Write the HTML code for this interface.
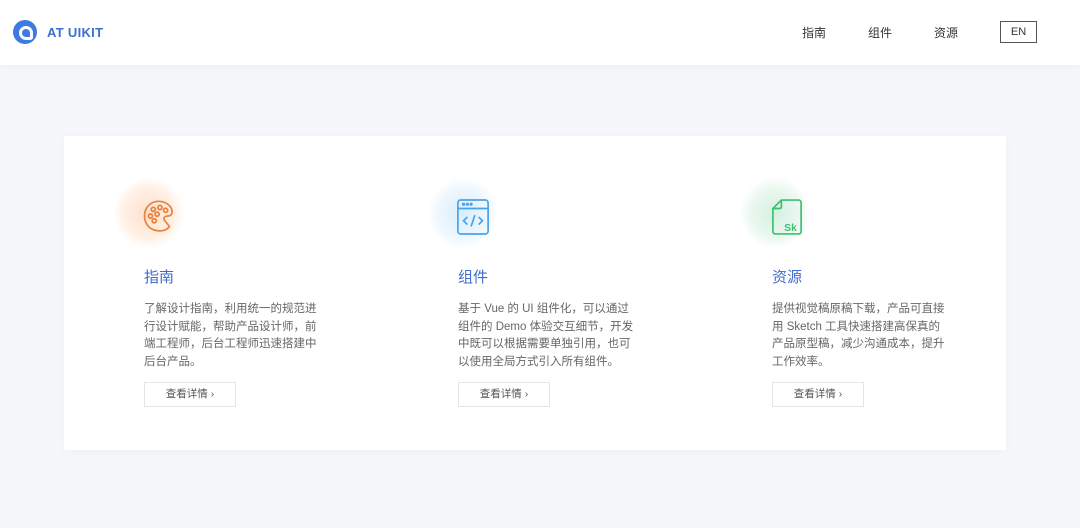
<!DOCTYPE html>
<html><head><meta charset="utf-8"><style>
*{margin:0;padding:0;box-sizing:border-box}
body{width:1080px;height:528px;background:#f6f7fb;font-family:"Liberation Sans","Noto Sans CJK SC",sans-serif;position:relative;overflow:hidden}
.hd{position:absolute;left:0;top:0;width:1080px;height:65px;background:#fff;box-shadow:0 2px 8px rgba(0,0,0,.04)}
.logo{position:absolute;left:13px;top:20px;width:24px;height:24px;border-radius:50%;background:#3d7be0}
.logo:after{content:"";position:absolute;left:6px;top:6px;width:8px;height:8px;border:3px solid #fff;border-radius:50% 50% 20% 50%}
.brand{position:absolute;left:47px;top:25px;font-size:13px;font-weight:bold;color:#3d6fcf;letter-spacing:.3px}
.nav{position:absolute;top:24px;font-size:12px;color:#333;white-space:nowrap}
.en{position:absolute;left:1000px;top:21px;width:37px;height:22px;border:1px solid #555;font-size:11px;color:#333;text-align:center;line-height:21px}
.card{position:absolute;left:64px;top:136px;width:942px;height:314px;background:#fff;box-shadow:0 2px 10px rgba(0,0,0,.03)}
.col{position:absolute;top:0}
.blob{position:absolute;width:70px;height:70px;border-radius:50%}
.t{position:absolute;top:130px;font-size:15px;color:#3e6dcc;white-space:nowrap}
.p{position:absolute;top:165px;width:178px;font-size:11.5px;line-height:17.5px;color:#666}
.b{position:absolute;top:246px;width:92px;height:25px;border:1px solid #e6e6e6;font-size:10.5px;color:#555;text-align:center;line-height:23px;white-space:nowrap}
</style></head><body>
<div class="hd">
<div class="logo"></div><div class="brand">AT UIKIT</div>
<div class="nav" style="left:802px">指南</div>
<div class="nav" style="left:868px">组件</div>
<div class="nav" style="left:934px">资源</div>
<div class="en">EN</div>
</div>
<div class="card">
<div class="col" style="left:80px">
<div class="blob" style="left:-30px;top:42px;background:radial-gradient(circle,#fde0cc 0%,#fff0e4 50%,rgba(255,255,255,0) 72%)"></div>
<svg style="position:absolute;left:-4px;top:62px" width="38" height="38" viewBox="0 0 40 40" fill="none" stroke="#e8823f" stroke-width="1.8"><path d="M31 30 C27 36 16 36 10 31 C3 25 3 13 10 7 C17 1 29 3 33 11 C35 16 33 19 29 19 C25 19 24 22 27 25 Z"/><circle cx="14" cy="12" r="2.2"/><circle cx="21" cy="10" r="2.2"/><circle cx="11" cy="19" r="2.2"/><circle cx="18" cy="17" r="2.2"/><circle cx="15" cy="24" r="2.2"/><circle cx="27" cy="13" r="2.2"/></svg>
<div class="t">指南</div>
<div class="p">了解设计指南，利用统一的规范进行设计赋能，帮助产品设计师，前端工程师，后台工程师迅速搭建中后台产品。</div>
<div class="b">查看详情 ›</div>
</div>
<div class="col" style="left:394px">
<div class="blob" style="left:-30px;top:42px;background:radial-gradient(circle,#d9edfc 0%,#eef7fe 50%,rgba(255,255,255,0) 72%)"></div>
<svg style="position:absolute;left:-2px;top:62px" width="34" height="38" viewBox="0 0 36 40" fill="none" stroke="#4aa3ea" stroke-width="1.8"><rect x="2" y="2" width="32" height="36" rx="3"/><path d="M2 11 H34"/><circle cx="8" cy="6.5" r=".8" fill="#4aa3ea"/><circle cx="12" cy="6.5" r=".8" fill="#4aa3ea"/><circle cx="16" cy="6.5" r=".8" fill="#4aa3ea"/><path d="M12 20 L8 24 L12 28 M24 20 L28 24 L24 28 M20 18 L16 30"/></svg>
<div class="t">组件</div>
<div class="p">基于 Vue 的 UI 组件化，可以通过组件的 Demo 体验交互细节，开发中既可以根据需要单独引用，也可以使用全局方式引入所有组件。</div>
<div class="b">查看详情 ›</div>
</div>
<div class="col" style="left:708px">
<div class="blob" style="left:-32px;top:42px;background:radial-gradient(circle,#d5f0e0 0%,#ebf8f0 50%,rgba(255,255,255,0) 72%)"></div>
<svg style="position:absolute;left:-1px;top:62px" width="32" height="38" viewBox="0 0 34 40" fill="none" stroke="#3fbf74" stroke-width="1.8"><path d="M11 2 H29 Q32 2 32 5 V35 Q32 38 29 38 H5 Q2 38 2 35 V11 Z"/><path d="M2 11 H9 Q11 11 11 9 V2"/><text x="14" y="35" font-size="11" fill="#3fbf74" stroke="none" font-family="Liberation Sans" font-weight="bold">Sk</text></svg>
<div class="t">资源</div>
<div class="p" style="width:176px">提供视觉稿原稿下载，产品可直接用 Sketch 工具快速搭建高保真的产品原型稿，减少沟通成本，提升工作效率。</div>
<div class="b">查看详情 ›</div>
</div>
</div>
</body></html>
